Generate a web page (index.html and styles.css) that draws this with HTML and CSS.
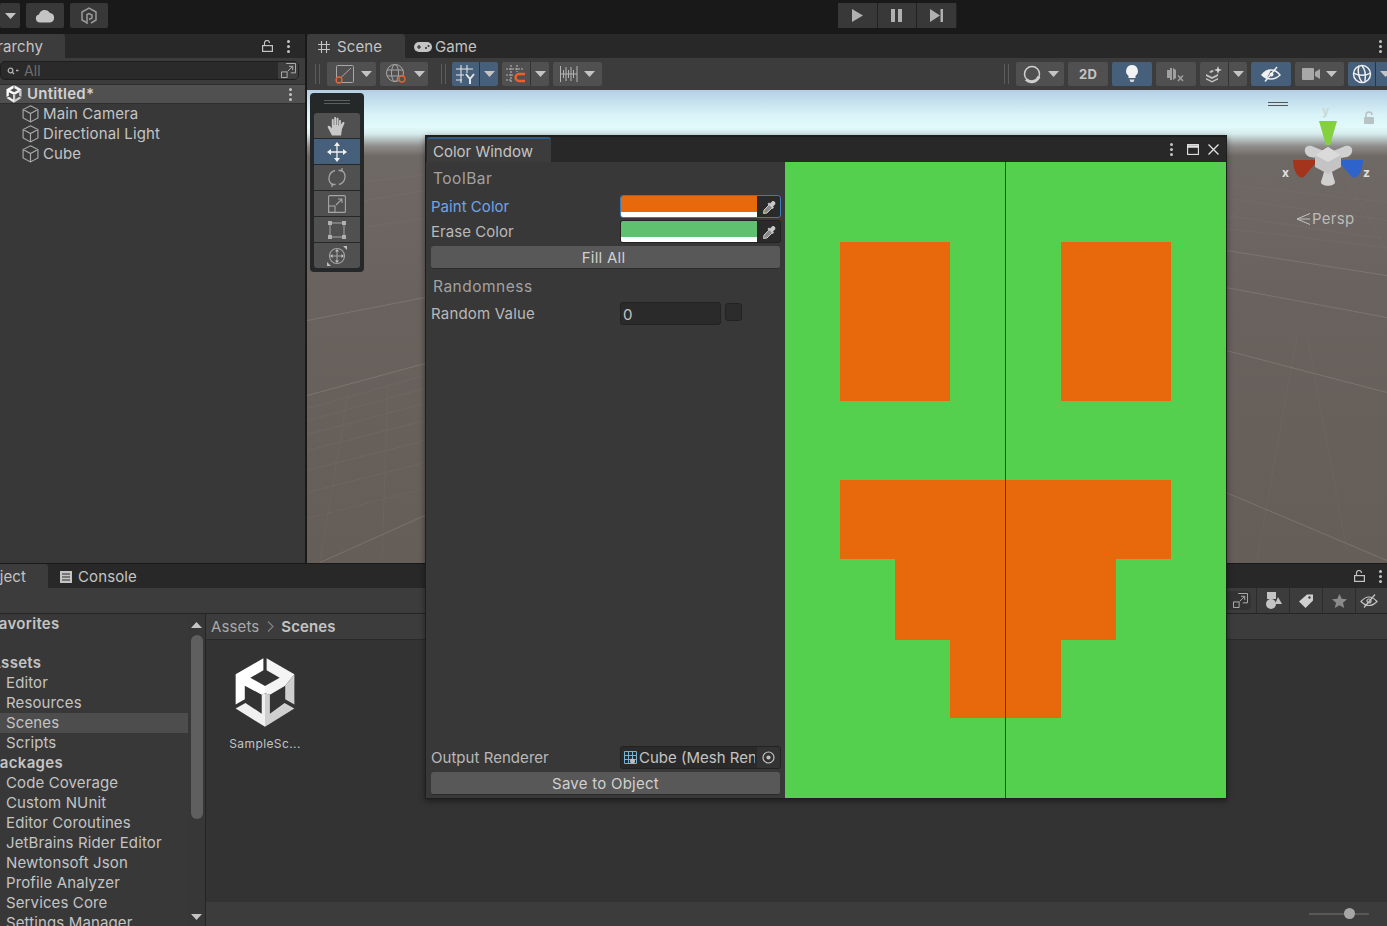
FILE: index.html
```html
<!DOCTYPE html>
<html lang="en">

<head>
    <meta charset="utf-8" />
    <title>Unity Editor - Color Window</title>
    <link rel="stylesheet" href="styles.css">
</head>

<body>
    <svg class="defs" width="0" height="0">
        <symbol id="unity-logo" viewBox="703 305 184 216">
            <path d="M790 308 705 357v93l28-16v-42l52 28 10-5v-22l-45-25 40-23z" fill="#fff"/>
            <path d="M800 308l85 49-28 35-47 28-15-5v-22l45-25-40-23z" fill="#f4f4f4"/>
            <path d="M885 357v93l-28-16v-42z" fill="#cfcfcf"/>
            <path d="M705 462l30-17 50 33v-58l10-5v103z" fill="#f0f0f0"/>
            <path d="M885 462l-30-17-45 33v-58l-15-5v103z" fill="#cfcfcf"/>
        </symbol>
        <symbol id="cube" viewBox="0 0 16 17">
            <path d="M8 .8l7 3.500v8L8 16 1 12.300v-8zM1 4.300L8 8l7-3.700M8 8v8" fill="none" stroke="#a8a8a8" stroke-width="1.100"/>
        </symbol>
        <symbol id="dropper" viewBox="0 0 14 14">
            <path d="M9 1.500c1.500-1.500 4.500 1.500 3 3l-2 2 1 1-1.500 1.500-5-5L6 2.500l1 1z" fill="#c8c8c8"/>
            <path d="M6 5L1 10l-.5 3.500L4 13l5-5" fill="#8a8a8a" stroke="#c8c8c8"/>
        </symbol>
        <symbol id="expand" viewBox="0 0 16 16">
            <path d="M5.500 .5h10v10h-5M.5 9.500h6v6h-6zM7 9l5-5M8.500 3.500H12.500V7.500" fill="none" stroke="#b4b4b4"/>
        </symbol>
        <symbol id="lock-open" viewBox="0 0 11 12">
            <rect x="0.600" y="5.600" width="9.800" height="5.800" fill="none" stroke="#c4c4c4" stroke-width="1.200"/>
            <path d="M2.500 5.500V3a2.500 2.500 0 0 1 5 0" fill="none" stroke="#c4c4c4" stroke-width="1.200"/>
        </symbol>
        <symbol id="down" viewBox="0 0 11 6">
            <path d="M0 0h11L5.500 6z" fill="#c4c4c4"/>
        </symbol>
    </svg>

    <header class="topbar">
        <div class="top-left">
            <button class="top-btn drop-only"><svg class="arrow"><use href="#down"/></svg></button>
            <button class="top-btn cloud-btn"><svg width="20" height="15" viewBox="0 0 20 15"><path d="M5 14.500a4 4 0 0 1-1-7.900A6 6 0 0 1 15 5a4.800 4.800 0 0 1 0 9.500z" fill="#c4c4c4"/></svg></button>
            <button class="top-btn collab-btn"><svg width="16" height="18" viewBox="0 0 16 18" fill="none" stroke="#9a9a9a" stroke-width="1.500"><path d="M5.500 15.500 1 13V5l7-4 7 4v8l-5 3"/><path d="M6 17V7.500L8 6.500l3 1.500v3L8 12.500"/></svg></button>
        </div>
        <div class="play-group">
            <button class="play-btn"><svg width="11" height="13" viewBox="0 0 11 13"><path d="M0 0l11 6.500L0 13z" fill="#b0b0b0"/></svg></button>
            <button class="play-btn"><svg width="11" height="13" viewBox="0 0 11 13"><path d="M0 0h4v13H0zM7 0h4v13H7z" fill="#b0b0b0"/></svg></button>
            <button class="play-btn"><svg width="13" height="13" viewBox="0 0 13 13"><path d="M0 0l10 6.500L0 13zM10.500 0H13v13h-2.500z" fill="#b0b0b0"/></svg></button>
        </div>
    </header>

    <div class="upper">
        <section class="hierarchy">
            <div class="tabbar">
                <div class="tab tab-clipped hier-tab"><span>Hierarchy</span></div>
                <div class="tab-tools">
                    <svg width="11" height="12"><use href="#lock-open"/></svg>
                    <span class="dots"><i></i><i></i><i></i></span>
                </div>
            </div>
            <div class="hier-search">
                <div class="search-field">
                    <svg width="12" height="8" viewBox="0 0 12 8" fill="none" stroke="#b0b0b0" stroke-width="1.300"><circle cx="3.500" cy="3.500" r="2.300"/><path d="M5 5l2 2M9 3.500h2.500"/></svg>
                    <span>All</span>
                    <div class="search-expand"><svg width="15" height="15"><use href="#expand"/></svg></div>
                </div>
            </div>
            <div class="scene-row">
                <svg width="16" height="18"><use href="#unity-logo"/></svg>
                <strong>Untitled*</strong>
                <span class="dots"><i></i><i></i><i></i></span>
            </div>
            <ul class="hier-list">
                <li><svg class="cube"><use href="#cube"/></svg>Main Camera</li>
                <li><svg class="cube"><use href="#cube"/></svg>Directional Light</li>
                <li><svg class="cube"><use href="#cube"/></svg>Cube</li>
            </ul>
        </section>

        <section class="scene">
            <div class="tabbar">
                <div class="tab scene-tab">
                    <svg width="12" height="12" viewBox="0 0 12 12" fill="none" stroke="#c4c4c4" stroke-width="1.100"><path d="M3.500 0v12M8.500 0v12M0 3.500h12M0 8.500h12"/></svg>
                    <span>Scene</span>
                </div>
                <div class="tab game-tab">
                    <svg width="18" height="10" viewBox="0 0 18 10"><rect width="18" height="10" rx="5" fill="#c4c4c4"/><path d="M3 5h4M5 3v4" stroke="#282828" stroke-width="1.200"/><circle cx="12" cy="6" r="1" fill="#282828"/><circle cx="14.500" cy="4" r="1" fill="#282828"/></svg>
                    <span>Game</span>
                </div>
                <div class="tab-tools"><span class="dots"><i></i><i></i><i></i></span></div>
            </div>

            <div class="scene-toolbar">
                <span class="grip"></span>
                <button class="tb-btn w49"><svg width="24" height="24" viewBox="0 0 24 24" fill="none"><rect x="5.500" y="3.500" width="17" height="17" rx="1" stroke="#a8a8a8"/><path d="M10 15.500L20 6" stroke="#a8a8a8"/><circle cx="8" cy="18" r="3" stroke="#e8622c" stroke-width="1.300"/></svg><svg class="arrow"><use href="#down"/></svg></button>
                <button class="tb-btn w48"><svg width="24" height="24" viewBox="0 0 24 24" fill="none" stroke="#a8a8a8"><circle cx="11" cy="11" r="8.500"/><ellipse cx="11" cy="11" rx="3.500" ry="8.500"/><path d="M3 8h16M3 14h16"/><circle cx="18" cy="17" r="3" stroke="#e8622c" stroke-width="1.300" fill="#505050"/></svg><svg class="arrow"><use href="#down"/></svg></button>
                <span class="grip grip-b"></span>
                <div class="split on">
                    <button class="tb-main"><svg width="22" height="20" viewBox="0 0 22 20" fill="none" stroke="#e4e4e4" stroke-width="1.100"><path d="M6 1v18M12 1v8M1 5h17M1 11h8M1 16h6"/><path d="M11 10l4 5 4-5M15 15v5" stroke-width="2"/></svg></button>
                    <button class="tb-drop"><svg class="arrow"><use href="#down"/></svg></button>
                </div>
                <div class="split">
                    <button class="tb-main w28"><svg width="22" height="20" viewBox="0 0 22 20" fill="none" stroke="#b4b4b4" stroke-width="1.100" stroke-dasharray="2 1"><path d="M6 1v18M12 1v7M1 5h17M1 11h7M1 16h6"/><path d="M20 10h-6a3.500 3.500 0 0 0 0 7h6" stroke="#ec5f2c" stroke-width="2.400" stroke-dasharray="none"/></svg></button>
                    <button class="tb-drop"><svg class="arrow"><use href="#down"/></svg></button>
                </div>
                <button class="tb-btn w49"><svg width="18" height="18" viewBox="0 0 18 18" fill="none" stroke="#b4b4b4"><path d="M.5 1v16M17 1v16M3.500 5v8M6 2v14M8.500 5v8M11 2v14M13.500 5v8M.5 9h16.500"/></svg><svg class="arrow"><use href="#down"/></svg></button>

                <span class="toolbar-fill"></span>

                <span class="grip grip-c"></span>
                <button class="tb-btn w48"><svg width="20" height="20" viewBox="0 0 20 20" fill="none" stroke="#cfcfcf"><circle cx="10" cy="10" r="7.500" stroke-width="1.500"/><path d="M4 15.500a8 8 0 0 0 13-3" stroke-width="3"/></svg><svg class="arrow"><use href="#down"/></svg></button>
                <button class="tb-btn w40 two-d">2D</button>
                <button class="tb-btn w40 on"><svg width="14" height="19" viewBox="0 0 14 19"><path d="M7 0a6 6 0 0 1 3.500 10.800V13h-7v-2.200A6 6 0 0 1 7 0z" fill="#f2f2f2"/><path d="M4.500 14.500h5l-1 2.500h-3z" fill="#d8d8d8"/></svg></button>
                <button class="tb-btn w40"><svg width="18" height="15" viewBox="0 0 18 15"><path d="M0 3h3V1h2v12H3v-2H0zM6 1l3 2v8l-3 2z" fill="#a0a0a0"/><path d="M11 8.500l5 5.500M16 8.500L11 14" stroke="#a0a0a0" stroke-width="1.500"/></svg></button>
                <div class="split">
                    <button class="tb-main w28"><svg width="18" height="17" viewBox="0 0 18 17"><path d="M1 8l6 3 6-3v2l-6 3-6-3zM1 12l6 3 6-3v1.500l-6 3-6-3z" fill="#c4c4c4"/><path d="M4 6l3-2 2 1-3 2z" fill="#c4c4c4"/><path d="M13 0l1 3 3 1-3 1-1 3-1-3-3-1 3-1z" fill="#d8d8d8"/></svg></button>
                    <button class="tb-drop"><svg class="arrow"><use href="#down"/></svg></button>
                </div>
                <button class="tb-btn w40 on"><svg width="20" height="16" viewBox="0 0 20 16"><path d="M1 9c3-4 6-5 9-5s6 1 9 5c-3 3-6 4-9 4s-6-1-9-4z" fill="none" stroke="#f0f0f0" stroke-width="1.500"/><path d="M1 9c3-4 6-5 9-5l-4 8c-2-.5-3.500-1.500-5-3z" fill="#f0f0f0"/><circle cx="10.500" cy="8.500" r="2" fill="#f0f0f0"/><path d="M4 15.500L16 1" stroke="#f0f0f0" stroke-width="1.400"/></svg></button>
                <button class="tb-btn w49"><svg width="18" height="12" viewBox="0 0 18 12"><rect width="12" height="12" rx="1" fill="#a8a8a8"/><path d="M13 4l5-3v10l-5-3z" fill="#a8a8a8"/></svg><svg class="arrow"><use href="#down"/></svg></button>
                <div class="split on edge">
                    <button class="tb-main"><svg width="20" height="20" viewBox="0 0 20 20" fill="none" stroke="#f0f0f0" stroke-width="1.500"><circle cx="10" cy="10" r="8.500"/><path d="M1.500 9c4 3 13 3 17 0M7 2c-2 5 0 13 3 16M10 2c3 3 4 8 3 15"/></svg></button>
                    <button class="tb-drop"><svg class="arrow"><use href="#down"/></svg></button>
                </div>
            </div>

            <div class="viewport">
                <svg class="ground" viewBox="0 0 1080 472" fill="none" stroke="#8a837e">
                    <g stroke-opacity=".55">
                        <path d="M0 230L118 207M0 305L118 273M13 472L118 425"/>
                        <path d="M919 160L1080 185M919 197L1080 227M919 260L1080 302M919 402L1080 470"/>
                    </g>
                    <g stroke-opacity=".16">
                        <path d="M0 318L118 285M0 330L118 298M0 344L118 313M0 360L118 330M0 380L118 350M0 402L118 372M0 428L118 398M0 145L118 128M0 120L118 100M0 98L118 84"/>
                        <path d="M13 472L41 303M75 470L81 293"/>
                        <path d="M919 132L966 80M1039 87L1080 160M919 138L1080 157M919 125L1076 148M919 108L1080 130M919 94L1080 112"/>
                        <path d="M950 470L990 245M1040 460L1000 245"/>
                    </g>
                </svg>

                <!-- tools overlay -->
                <div class="tools">
                    <div class="tools-grip"></div>
                    <button class="tool"><svg width="20" height="20" viewBox="0 0 20 20"><path d="M5 19.500L.800 11.500C0 9.800 2.300 9 3.300 10.500L4.800 12.500V4c0-1.300 1.900-1.300 1.900 0v5h.5V2c0-1.300 1.900-1.300 1.900 0v7h.5V2.800c0-1.300 1.900-1.300 1.900 0V9.500h.5V5c0-1.300 1.900-1.300 1.900 0v3.500l1.500-2c1-1 2.500-.2 2 1L15 13l-1 6.500z" fill="#c8c8c8"/></svg></button>
                    <button class="tool tool-on"><svg width="20" height="20" viewBox="0 0 20 20" fill="none" stroke="#f0f0f0" stroke-width="1.300"><path d="M10 3v14M3 10h14"/><path d="M10 0l3 4H7zM10 20l3-4H7zM0 10l4-3v6zM20 10l-4-3v6z" fill="#f0f0f0" stroke="none"/></svg></button>
                    <button class="tool"><svg width="20" height="21" viewBox="0 0 20 21" fill="none" stroke="#a4a4a4" stroke-width="1.300"><path d="M8 3.500A8 8 0 0 0 5 17.500M12 17.500A8 8 0 0 0 15 3.500"/><path d="M15 1v4M15 3.500h-3.500M5 20v-4M5 17.500h3.500"/></svg></button>
                    <button class="tool"><svg width="18" height="18" viewBox="0 0 18 18" fill="none" stroke="#a4a4a4" stroke-width="1.100"><rect x=".6" y=".6" width="16.800" height="16.800" rx="1"/><rect x=".6" y="11" width="6.400" height="6.400"/><path d="M8 10l6-6M10 4h4v4"/></svg></button>
                    <button class="tool"><svg width="18" height="18" viewBox="0 0 18 18"><path d="M2 4v10M16 4v10M4 2h10M4 16h10" fill="none" stroke="#a4a4a4"/><path d="M0 0h4v4H0zM14 0h4v4h-4zM0 14h4v4H0zM14 14h4v4h-4z" fill="#b0b0b0"/></svg></button>
                    <button class="tool"><svg width="20" height="20" viewBox="0 0 20 20" fill="none" stroke="#a4a4a4" stroke-width="1.100"><circle cx="10" cy="10" r="7.500"/><path d="M10 4v12M4 10h12"/><path d="M10 3l2 2.500H8zM10 17l2-2.500H8zM3 10l2.500-2v4zM17 10l-2.500-2v4zM20 0v4l-4-4zM0 20v-4l4 4z" fill="#c0c0c0" stroke="none"/></svg></button>
                </div>

                <!-- scene gizmo -->
                <div class="gizmo-grip"></div>
                <svg class="gizmo" width="100" height="100" viewBox="0 0 100 100">
                    <text x="40" y="13" class="axis-y">y</text>
                    <text x="0" y="75" class="axis-label">x</text>
                    <text x="81" y="75" class="axis-label">z</text>
                    <path d="M84 16v-3a3 3 0 0 1 6 0" fill="none" stroke="#b6c2c4" stroke-width="1.500"/>
                    <rect x="82" y="15" width="10" height="7" rx="1" fill="#b6c2c4"/>
                    <path d="M37 19h18l-7 24h-4z" fill="#84d03f"/>
                    <path d="M11 58h25L22 75c-6 3-11-7-11-17z" fill="#a5341d"/>
                    <path d="M81 58H55l15 17c6 3 11-7 11-17z" fill="#2f63cc"/>
                    <path d="M23 47c1-4 6-4 9-2l10 4-1 8-13-2c-3-1-6-4-5-8zM70 47c-1-4-6-4-9-2l-10 4 1 8 13-2c3-1 6-4 5-8zM39 80c1-4 3-8 4-16h6c1 8 3 12 4 16 0 5-14 5-14 0z" fill="#d0d0d0"/>
                    <path d="M46 45l13 8v12l-13 7-13-7V53z" fill="#c4c4c4"/>
                    <path d="M46 45l13 8-13 7-13-7z" fill="#dadada"/>
                </svg>
                <div class="persp"><svg width="14" height="12" viewBox="0 0 14 12" fill="none" stroke="#c4c4c2"><path d="M14 .5L1 6l13 5.500M14 6H2"/></svg><span>Persp</span></div>
            </div>
        </section>
    </div>

    <section class="project">
        <div class="tabbar bottom-tabs">
            <div class="tab tab-clipped proj-tab"><span>Project</span></div>
            <div class="tab console-tab">
                <svg width="12" height="12" viewBox="0 0 12 12"><path d="M0 0h12v12H0z" fill="#c4c4c4"/><path d="M2 3h8M2 6h8M2 9h8" stroke="#282828"/></svg>
                <span>Console</span>
            </div>
            <div class="tab-tools">
                <svg width="11" height="12"><use href="#lock-open"/></svg>
                <span class="dots"><i></i><i></i><i></i></span>
            </div>
        </div>
        <div class="project-toolbar">
            <div class="proj-search"><svg width="15" height="15"><use href="#expand"/></svg></div>
            <button class="proj-tool"><svg width="17" height="17" viewBox="0 0 17 17"><rect x="2" y="0" width="9" height="7" fill="#c4c4c4"/><circle cx="6" cy="12" r="5" fill="#c4c4c4"/><path d="M13 5l4 7h-7z" fill="#c4c4c4"/></svg></button>
            <button class="proj-tool"><svg width="14" height="14" viewBox="0 0 14 14"><path d="M8 .5h6v6L6.500 14 0 7.500z" fill="#d0d0d0"/><circle cx="10.500" cy="3.500" r="1.200" fill="#3c3c3c"/></svg></button>
            <button class="proj-tool"><svg width="15" height="14" viewBox="0 0 15 14"><path d="M7.500 0l2.200 4.800 5.300.5-4 3.500 1.200 5.200-4.700-2.800L2.800 14 4 8.800 0 5.300l5.300-.5z" fill="#8a8a8a"/></svg></button>
            <button class="proj-tool last"><svg width="18" height="14" viewBox="0 0 18 14" fill="none" stroke="#c4c4c4" stroke-width="1.200"><path d="M1 7.500C4 4 6.500 3 9 3s5 1 8 4.500C14 10.500 11.500 11.500 9 11.500S4 10.500 1 7.500z"/><circle cx="9" cy="7" r="2"/><path d="M4 13.500L15 .5"/></svg></button>
        </div>
        <div class="project-body">
            <aside class="tree">
                <ul class="tree-list">
                    <li class="bold fav"><span>Favorites</span></li>
                    <li class="bold"><span>Assets</span></li>
                    <li>Editor</li>
                    <li>Resources</li>
                    <li class="selected">Scenes</li>
                    <li>Scripts</li>
                    <li class="bold"><span>Packages</span></li>
                    <li>Code Coverage</li>
                    <li>Custom NUnit</li>
                    <li>Editor Coroutines</li>
                    <li>JetBrains Rider Editor</li>
                    <li>Newtonsoft Json</li>
                    <li>Profile Analyzer</li>
                    <li>Services Core</li>
                    <li>Settings Manager</li>
                </ul>
                <div class="scrollbar">
                    <svg width="11" height="6" viewBox="0 0 11 6"><path d="M5.500 0l5.500 6H0z" fill="#c4c4c4"/></svg>
                    <div class="track"><div class="thumb"></div></div>
                    <svg width="11" height="6"><use href="#down"/></svg>
                </div>
            </aside>
            <div class="files">
                <div class="crumbs"><span>Assets</span><svg width="7" height="11" viewBox="0 0 7 11" fill="none" stroke="#7e7e7e" stroke-width="1.300"><path d="M1 .5l5 5-5 5"/></svg><strong>Scenes</strong></div>
                <div class="file-grid">
                    <div class="file">
                        <svg width="60" height="71"><use href="#unity-logo"/></svg>
                        <span>SampleSc...</span>
                    </div>
                </div>
                <div class="status">
                    <div class="slider"><i></i></div>
                </div>
            </div>
        </div>
    </section>

    <!-- floating editor window -->
    <div class="color-window">
        <div class="win-tabs">
            <div class="win-tab">Color Window</div>
            <div class="win-actions">
                <span class="dots"><i></i><i></i><i></i></span>
                <svg width="12" height="11" viewBox="0 0 12 11" fill="none" stroke="#e4e4e4" stroke-width="1.100"><rect x=".6" y=".6" width="10.800" height="9.800"/><path d="M0 2.500h12" stroke-width="2.500"/></svg>
                <svg width="11" height="11" viewBox="0 0 11 11" fill="none" stroke="#e4e4e4" stroke-width="1.300"><path d="M.5.500l10 10M10.500.500l-10 10"/></svg>
            </div>
        </div>
        <div class="win-body">
            <div class="inspector">
                <div class="heading">ToolBar</div>
                <div class="field focus">
                    <label>Paint Color</label>
                    <div class="color-field">
                        <div class="swatch paint"></div>
                        <div class="picker"><svg width="14" height="14"><use href="#dropper"/></svg></div>
                    </div>
                </div>
                <div class="field">
                    <label>Erase Color</label>
                    <div class="color-field">
                        <div class="swatch erase"></div>
                        <div class="picker"><svg width="14" height="14"><use href="#dropper"/></svg></div>
                    </div>
                </div>
                <button class="wide-btn fill">Fill All</button>
                <div class="heading">Randomness</div>
                <div class="field">
                    <label class="low">Random Value</label>
                    <div class="num-field">0</div>
                    <div class="check"></div>
                </div>
                <div class="inspector-fill"></div>
                <div class="field output">
                    <label>Output Renderer</label>
                    <div class="object-field">
                        <svg width="13" height="13" viewBox="0 0 13 13" fill="none" stroke="#6fb6de"><path d="M.5.500h12v12H.5zM4.500.5v12M8.500.5v12M.5 4.500h12M.5 8.500h12"/><circle cx="8.500" cy="10" r="2.500" fill="#bdbdbd" stroke="none"/></svg>
                        <span>Cube (Mesh Renderer)</span>
                        <div class="obj-pick"><svg width="13" height="13" viewBox="0 0 13 13" fill="none" stroke="#c4c4c4" stroke-width="1.200"><circle cx="6.500" cy="6.500" r="5.500"/><circle cx="6.500" cy="6.500" r="1.500" fill="#c4c4c4"/></svg></div>
                    </div>
                </div>
                <button class="wide-btn save">Save to Object</button>
            </div>
            <svg class="canvas" width="441" height="636" viewBox="0 0 441 636">
                <rect width="441" height="636" fill="#55cf4e"/>
                <g fill="#e8690c">
                    <rect x="55" y="80" width="110" height="159"/>
                    <rect x="276" y="80" width="110" height="159"/>
                    <rect x="55" y="318" width="331" height="79"/>
                    <rect x="110" y="397" width="221" height="81"/>
                    <rect x="165" y="478" width="111" height="78"/>
                </g>
                <rect x="220" width="1" height="636" fill="#20551d"/>
            </svg>
        </div>
    </div>
</body>
</html>
```

FILE: styles.css
```css
* {
    box-sizing: border-box;
}

html, body {
    height: 100%;
}

body {
    margin: 0;
    overflow: hidden;
    background: #191919;
    color: #c4c4c4;
    font-family: Inter, "Noto Sans", sans-serif;
    font-size: 15px;
    line-height: 20px;
    letter-spacing: .12px;
    position: relative;
}

button {
    font: inherit;
    letter-spacing: inherit;
    color: inherit;
    border: 0;
    padding: 0;
    display: flex;
    align-items: center;
    justify-content: center;
}

ul {
    list-style: none;
    margin: 0;
    padding: 0;
}

.defs {
    position: absolute;
}

.arrow {
    width: 11px;
    height: 6px;
}

.dots {
    display: inline-flex;
    flex-direction: column;
    gap: 2px;
    width: 3px;
}

.dots i {
    display: block;
    width: 3px;
    height: 3px;
    background: #c4c4c4;
    border-radius: 50%;
}

/* top bar */
.topbar {
    height: 34px;
    background: #191919;
    display: flex;
    justify-content: space-between;
    padding-top: 3px;
    position: relative;
}

.top-left {
    display: flex;
    gap: 6px;
    height: 25px;
}

.top-btn {
    height: 25px;
    background: #383838;
    border-radius: 2px;
}

.drop-only {
    width: 20px;
}

.cloud-btn {
    width: 38px;
}

.collab-btn {
    width: 38px;
}

.play-group {
    position: absolute;
    left: 838px;
    top: 3px;
    display: flex;
}

.play-btn {
    width: 39.500px;
    height: 25px;
    background: #383838;
    border-right: 1px solid #222;
}

/* upper docks */
.upper {
    height: 529px;
    display: flex;
    gap: 2px;
}

.tabbar {
    height: 24px;
    background: #282828;
    display: flex;
    align-items: stretch;
}

.tab {
    display: flex;
    align-items: center;
    gap: 7px;
    padding-top: 2px;
    white-space: nowrap;
}

.tab-clipped {
    overflow: hidden;
    background: #3c3c3c;
    border-radius: 0 3px 0 0;
    justify-content: flex-end;
    padding-right: 22px;
}

.hier-tab {
    width: 65px;
}

.tab-tools {
    margin-left: auto;
    display: flex;
    align-items: center;
    gap: 14px;
    padding-right: 15px;
}

.hierarchy {
    width: 305px;
    background: #383838;
    flex: none;
}

.hier-search {
    height: 26px;
    background: #3c3c3c;
    padding: 3px 6px 4px 0;
}

.search-field {
    height: 19px;
    background: #2a2a2a;
    border: 1px solid #1e1e1e;
    border-radius: 5px;
    display: flex;
    align-items: center;
    gap: 5px;
    padding-left: 6px;
    color: #6e6e6e;
    font-size: 14px;
}

.search-expand {
    margin-left: auto;
    width: 20px;
    height: 17px;
    background: #3e3e3e;
    display: flex;
    align-items: center;
    justify-content: center;
    border-radius: 0 4px 4px 0;
}

.scene-row {
    height: 20px;
    background: #505050;
    border-top: 1px solid #2e2e2e;
    border-bottom: 1px solid #2e2e2e;
    display: flex;
    align-items: center;
    gap: 5px;
    padding: 0 13px 0 6px;
}

.scene-row strong {
    font-weight: 600;
    color: #d2d2d2;
    letter-spacing: .25px;
}

.scene-row .dots {
    margin-left: auto;
}

.hier-list li {
    height: 20px;
    display: flex;
    align-items: center;
    gap: 4px;
    padding-left: 22px;
}

.cube {
    width: 17px;
    height: 18px;
    flex: none;
}

/* scene dock */
.scene {
    flex: 1;
    min-width: 0;
    display: flex;
    flex-direction: column;
    background: #3c3c3c;
}

.scene-tab {
    width: 98px;
    background: #3c3c3c;
    border-radius: 3px 3px 0 0;
    padding-left: 11px;
}

.game-tab {
    padding-left: 9px;
    gap: 3px;
}

.scene .tab-tools {
    padding-right: 5px;
}

.scene-toolbar {
    height: 32px;
    padding: 4px 0 4px 8px;
    display: flex;
    gap: 4px;
    align-items: stretch;
    overflow: hidden;
}

.grip {
    width: 5px;
    flex: none;
    margin: 2px 3px 2px 0;
    border-left: 1px solid #5c5c5c;
    border-right: 1px solid #5c5c5c;
}

.grip-b {
    margin-left: 9px;
    margin-right: 2px;
}

.grip-c {
    margin-right: 3px;
}

.toolbar-fill {
    flex: 1;
}

.tb-btn {
    flex: none;
    background: #505050;
    border-radius: 2px;
    gap: 6px;
}

.tb-btn.on,
.split.on > button {
    background: #46607c;
}

.w40 {
    width: 40px;
}

.w48 {
    width: 48px;
}

.w49 {
    width: 49px;
}

.two-d {
    font-weight: 700;
    font-size: 13px;
    color: #c4c4c4;
}

.split {
    display: flex;
    flex: none;
    gap: 1px;
    border-radius: 2px;
    background: #333;
    overflow: hidden;
}

.split > button {
    background: #505050;
}

.tb-main {
    width: 27px;
}

.tb-main.w28 {
    width: 28px;
}

.tb-drop {
    width: 18px;
}

.split.edge {
    margin-right: -7px;
}

.viewport {
    flex: 1;
    position: relative;
    overflow: hidden;
    background: linear-gradient(to bottom, #b4cfe5 0, #d8f2f7 24px, #e2fafb 37px, #d6ebec 44px, #8f8e8c 56px, #6f6966 66px, #6a625e 200px, #655d58 472px);
}

.ground {
    position: absolute;
    inset: 0;
    width: 100%;
    height: 100%;
}

/* tools overlay */
.tools {
    position: absolute;
    left: 3px;
    top: 3px;
    width: 54px;
    height: 179px;
    background: #242828;
    border-radius: 4px;
    padding: 0 4px;
    display: flex;
    flex-direction: column;
    gap: 1px;
}

.tools-grip {
    height: 4px;
    margin: 7px 10px 8px;
    border-top: 1px solid #5b5f5f;
    border-bottom: 1px solid #5b5f5f;
    flex: none;
}

.tool {
    width: 46px;
    height: 25px;
    background: #505050;
    flex: none;
}

.tool-on {
    background: #46607c;
}

.tools .tool:nth-child(2) {
    border-radius: 3px 3px 0 0;
}

.tools .tool:last-child {
    border-radius: 0 0 3px 3px;
}

.gizmo-grip {
    position: absolute;
    left: 961px;
    top: 12px;
    width: 20px;
    height: 4px;
    border-top: 1px solid #555;
    border-bottom: 1px solid #555;
}

.gizmo {
    position: absolute;
    left: 975px;
    top: 12px;
}

.axis-label,
.axis-y {
    font-size: 12px;
    font-weight: 700;
    fill: #e0e0e0;
}

.axis-y {
    fill: #c8d8d8;
}

.persp {
    position: absolute;
    left: 989px;
    top: 119px;
    display: flex;
    align-items: center;
    gap: 2px;
    color: #bdbcb9;
    letter-spacing: .3px;
}

/* project dock */
.project {
    position: relative;
    margin-top: 1px;
    height: 362px;
    background: #383838;
    display: flex;
    flex-direction: column;
}

.proj-tab {
    width: 48px;
    padding-right: 22px;
}

.console-tab {
    padding-left: 12px;
    gap: 6px;
}

.bottom-tabs .tab {
    padding-top: 2px;
}

.bottom-tabs .tab-tools {
    padding-right: 5px;
}

.project-toolbar {
    height: 26px;
    background: #3c3c3c;
    border-bottom: 1px solid #242424;
    display: flex;
    justify-content: flex-end;
    padding-right: 5px;
}

.proj-search {
    width: 27px;
    margin: 3px 5px 3px 0;
    background: #333;
    border-radius: 0 5px 5px 0;
    display: flex;
    align-items: center;
    justify-content: flex-end;
    padding-right: 3px;
}

.proj-tool {
    width: 33px;
    background: #3c3c3c;
    border-left: 1px solid #2c2c2c;
}

.proj-tool.last {
    width: 27px;
}

.project-body {
    flex: 1;
    min-height: 0;
    display: flex;
}

.tree {
    width: 206px;
    flex: none;
    display: flex;
    border-right: 1px solid #252525;
    overflow: hidden;
}

.tree-list {
    width: 188px;
    flex: none;
}

.tree-list li {
    height: 20px;
    padding-left: 6px;
    white-space: nowrap;
    overflow: hidden;
}

.tree-list .bold {
    font-weight: 600;
    padding-left: 0;
    letter-spacing: .3px;
}

.tree-list .bold span {
    display: block;
    margin-left: -10px;
}

.tree-list .fav {
    margin-bottom: 19px;
}

.tree-list .selected {
    background: #4d4d4d;
}

.scrollbar {
    flex: 1;
    background: #373737;
    display: flex;
    flex-direction: column;
    align-items: center;
    padding: 8px 0 6px;
}

.track {
    flex: 1;
    width: 100%;
    padding: 7px 2px;
}

.thumb {
    width: 12px;
    height: 184px;
    margin: 0 auto;
    background: #5f5f5f;
    border-radius: 6px;
}

.files {
    flex: 1;
    min-width: 0;
    display: flex;
    flex-direction: column;
    background: #333;
}

.crumbs {
    height: 26px;
    background: #3c3c3c;
    border-bottom: 1px solid #2a2a2a;
    display: flex;
    align-items: center;
    gap: 8px;
    padding-left: 5px;
    color: #a8a8a8;
}

.crumbs strong {
    font-weight: 600;
    color: #c4c4c4;
    margin-left: -1px;
}

.file-grid {
    flex: 1;
    padding: 17px 0 0 20px;
}

.file {
    width: 78px;
    display: flex;
    flex-direction: column;
    align-items: center;
    gap: 8px;
}

.file span {
    font-size: 12px;
    line-height: 16px;
    letter-spacing: .4px;
}

.status {
    height: 24px;
    background: #3c3c3c;
    display: flex;
    justify-content: flex-end;
    align-items: center;
    padding-right: 18px;
}

.slider {
    width: 60px;
    height: 2px;
    background: #585858;
    position: relative;
}

.slider i {
    position: absolute;
    left: 35px;
    top: -5px;
    width: 11px;
    height: 11px;
    border-radius: 50%;
    background: #a6a6a6;
}

/* color window */
.color-window {
    position: absolute;
    left: 425px;
    top: 135px;
    width: 802px;
    height: 664px;
    background: #383838;
    border: 1px solid #1e1e1e;
    border-top-width: 2px;
    box-shadow: 0 2px 6px rgba(0, 0, 0, .45);
    display: flex;
    flex-direction: column;
}

.win-tabs {
    height: 25px;
    background: #282828;
    display: flex;
    flex: none;
}

.win-tab {
    width: 124px;
    margin-left: 1px;
    background: #3c3c3c;
    border-top: 2px solid #2c5d87;
    border-radius: 3px 3px 0 0;
    padding-left: 6px;
    line-height: 25px;
    letter-spacing: 0;
    white-space: nowrap;
}

.win-actions {
    margin-left: auto;
    display: flex;
    align-items: center;
    gap: 9px;
    padding-right: 7px;
}

.win-actions .dots {
    margin-right: 5px;
}

.win-body {
    flex: 1;
    display: flex;
    min-height: 0;
}

.inspector {
    width: 359px;
    flex: none;
    display: flex;
    flex-direction: column;
    padding: 0 4px 3px 5px;
}

.canvas {
    display: block;
    flex: none;
}

.heading {
    height: 33px;
    padding: 7px 0 0 2px;
    color: #a2a2a2;
    font-size: 15.500px;
    letter-spacing: .5px;
    flex: none;
}

.wide-btn + .heading {
    padding-top: 8px;
}

.field {
    height: 23px;
    display: flex;
    align-items: center;
    margin-bottom: 2px;
    flex: none;
}

.field.output {
    margin-bottom: 3px;
}

.field label {
    width: 189px;
    flex: none;
    color: #b8b8b8;
    letter-spacing: .04px;
}

.field label.low {
    padding-top: 1px;
    letter-spacing: .2px;
}

.field.focus label {
    color: #6fa4ea;
}

.color-field {
    width: 161px;
    height: 23px;
    display: flex;
    background: #2a2a2a;
    border: 1px solid #222;
    border-radius: 3px;
    overflow: hidden;
}

.field.focus .color-field {
    border-color: #3a79bb;
}

.swatch {
    width: 136px;
    height: 21px;
    border-bottom: 5px solid #fff;
}

.swatch.paint {
    background: #e8690c;
}

.swatch.erase {
    background: #5fc070;
}

.picker {
    flex: 1;
    display: flex;
    align-items: center;
    justify-content: center;
    padding-left: 3px;
}

.num-field {
    width: 101px;
    height: 23px;
    background: #2a2a2a;
    border: 1px solid #222;
    border-radius: 3px;
    padding-left: 2px;
    line-height: 23px;
}

.check {
    width: 17px;
    height: 18px;
    margin: -3px 0 0 4px;
    background: #2c2c2c;
    border: 1px solid #222;
    border-radius: 3px;
}

.inspector-fill {
    flex: 1;
}

.object-field {
    width: 161px;
    height: 23px;
    background: #2a2a2a;
    border: 1px solid #222;
    border-radius: 3px;
    display: flex;
    align-items: center;
    gap: 2px;
    padding-left: 3px;
    overflow: hidden;
    white-space: nowrap;
    letter-spacing: 0;
}

.object-field span {
    flex: 1;
    overflow: hidden;
    color: #c4c4c4;
}

.obj-pick {
    width: 23px;
    height: 21px;
    flex: none;
    background: #333;
    display: flex;
    align-items: center;
    justify-content: center;
}

.wide-btn {
    width: 349px;
    height: 23px;
    flex: none;
    background: #585858;
    border-radius: 3px;
    border-bottom: 1px solid #2b2b2b;
    padding-top: 1px;
    color: #d0d0d0;
    letter-spacing: .25px;
}

.wide-btn.fill {
    margin-top: 1px;
    padding-right: 4px;
}
```
